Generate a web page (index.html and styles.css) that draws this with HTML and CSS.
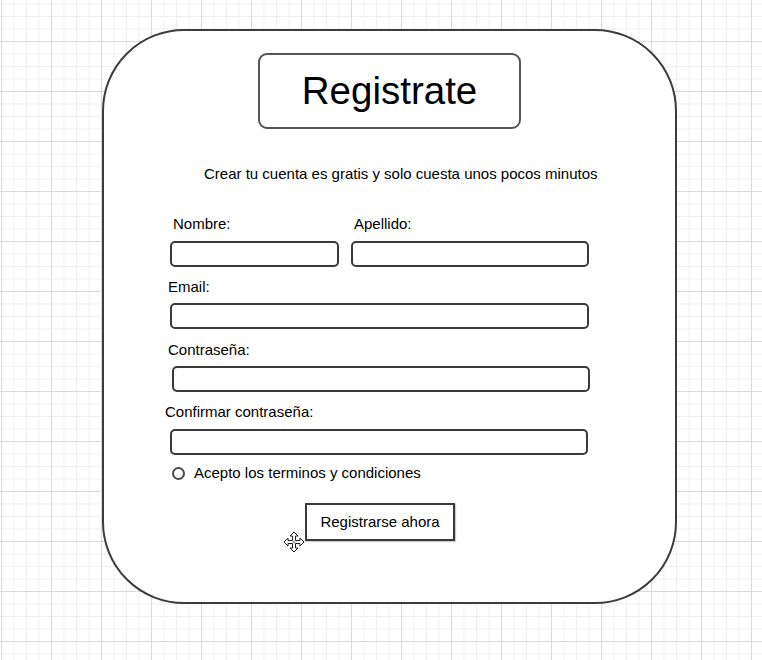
FILE: index.html
```html
<!DOCTYPE html>
<html lang="es">
<head>
<meta charset="utf-8">
<title>Registrate</title>
<link rel="stylesheet" href="styles.css">
</head>
<body>
<div class="card">
  <div class="title">Registrate</div>
  <p class="subtitle">Crear tu cuenta es gratis y solo cuesta unos pocos minutos</p>
  <div class="row-two">
    <div class="field field-nombre">
      <label class="lbl lbl-r3">Nombre:</label>
      <div class="input"></div>
    </div>
    <div class="field field-apellido">
      <label class="lbl lbl-r3">Apellido:</label>
      <div class="input"></div>
    </div>
  </div>
  <div class="field field-email">
    <label class="lbl lbl-l2 lbl-gap7">Email:</label>
    <div class="input input-wide"></div>
  </div>
  <div class="field field-pass">
    <label class="lbl lbl-l2 lbl-gap7">Contraseña:</label>
    <div class="input input-pass"></div>
  </div>
  <div class="field field-confirm">
    <label class="lbl lbl-l5">Confirmar contraseña:</label>
    <div class="input input-confirm"></div>
  </div>
  <div class="terms">
    <span class="radio"></span>
    <span class="terms-text">Acepto los terminos y condiciones</span>
  </div>
  <div class="btn-row">
    <div class="btn">Registrarse ahora</div>
    <svg class="move-cursor" width="22" height="22" viewBox="0 0 22 22">
      <polygon points="11,1 15,5 12.5,5 12.5,9.5 17,9.5 17,7 21,11 17,15 17,12.5 12.5,12.5 12.5,17 15,17 11,21 7,17 9.5,17 9.5,12.5 5,12.5 5,15 1,11 5,7 5,9.5 9.5,9.5 9.5,5 7,5" fill="#fff" stroke="#222" stroke-width="1" stroke-linejoin="miter"/>
      <path d="M9.5 11h3M11 9.5v3" stroke="#888" stroke-width="1"/>
    </svg>
  </div>
</div>
</body>
</html>
```
FILE: styles.css
```css
html {
  background-color: #ffffff;
  background-image:
    linear-gradient(to right, #dadada 1px, transparent 1px),
    linear-gradient(to bottom, #dadada 1px, transparent 1px),
    linear-gradient(to right, #efefef 1px, transparent 1px),
    linear-gradient(to bottom, #efefef 1px, transparent 1px);
  background-size: 50px 50px, 50px 50px, 12.5px 12.5px, 12.5px 12.5px;
  background-position: 1px 0, 0 41px, 1px 0, 0 3.5px;
  min-height: 100%;
}

body {
  margin: 0;
  font-family: "Liberation Sans", Arial, sans-serif;
  font-size: 15px;
  line-height: 18px;
  color: #000;
  overflow: hidden;
}

.card {
  box-sizing: border-box;
  width: 575px;
  height: 575px;
  margin: 29px 0 0 102px;
  border: 2px solid #3c3c3c;
  border-radius: 82px;
  background: #fff;
  padding: 22px 0 0 66px;
}

.title {
  box-sizing: border-box;
  width: 263px;
  height: 76px;
  margin-left: 88px;
  border: 2px solid #555;
  border-radius: 9px;
  font-size: 38.5px;
  line-height: 72px;
  text-align: center;
}

.subtitle {
  margin: 36px 0 0;
  padding-left: 34px;
}

.row-two {
  display: flex;
  gap: 12px;
  margin-top: 32px;
}

.field {
  display: flex;
  flex-direction: column;
}

.field-nombre { width: 169px; }
.field-apellido { width: 238px; }
.field-email { margin-top: 11px; }
.field-pass { margin-top: 12px; }
.field-confirm { margin-top: 11px; }

.lbl {
  display: block;
  margin-bottom: 8px;
}
.lbl-gap7 { margin-bottom: 7px; }
.lbl-r3 { margin-left: 3px; }
.lbl-l2 { margin-left: -2px; }
.lbl-l5 { margin-left: -5px; }

.input {
  box-sizing: border-box;
  height: 26px;
  border: 2px solid #3a3a3a;
  border-radius: 5px;
  background: #fff;
}

.input-wide { width: 419px; }
.input-pass { width: 418px; margin-left: 2px; }
.input-confirm { width: 418px; }

.terms {
  display: flex;
  align-items: center;
  margin-top: 9px;
}

.radio {
  box-sizing: border-box;
  width: 13px;
  height: 13px;
  margin-left: 2px;
  margin-right: 9px;
  border: 2px solid #4a4a4a;
  border-radius: 50%;
}

.btn-row {
  position: relative;
  margin: 21px 0 0 135px;
  width: 150px;
}

.btn {
  box-sizing: border-box;
  width: 150px;
  height: 38px;
  border: 2px solid #3a3a3a;
  box-shadow: 1px 1px 1px rgba(0, 0, 0, 0.2);
  line-height: 34px;
  text-align: center;
  background: #fff;
}

.move-cursor {
  position: absolute;
  left: -22px;
  top: 28px;
}
```
